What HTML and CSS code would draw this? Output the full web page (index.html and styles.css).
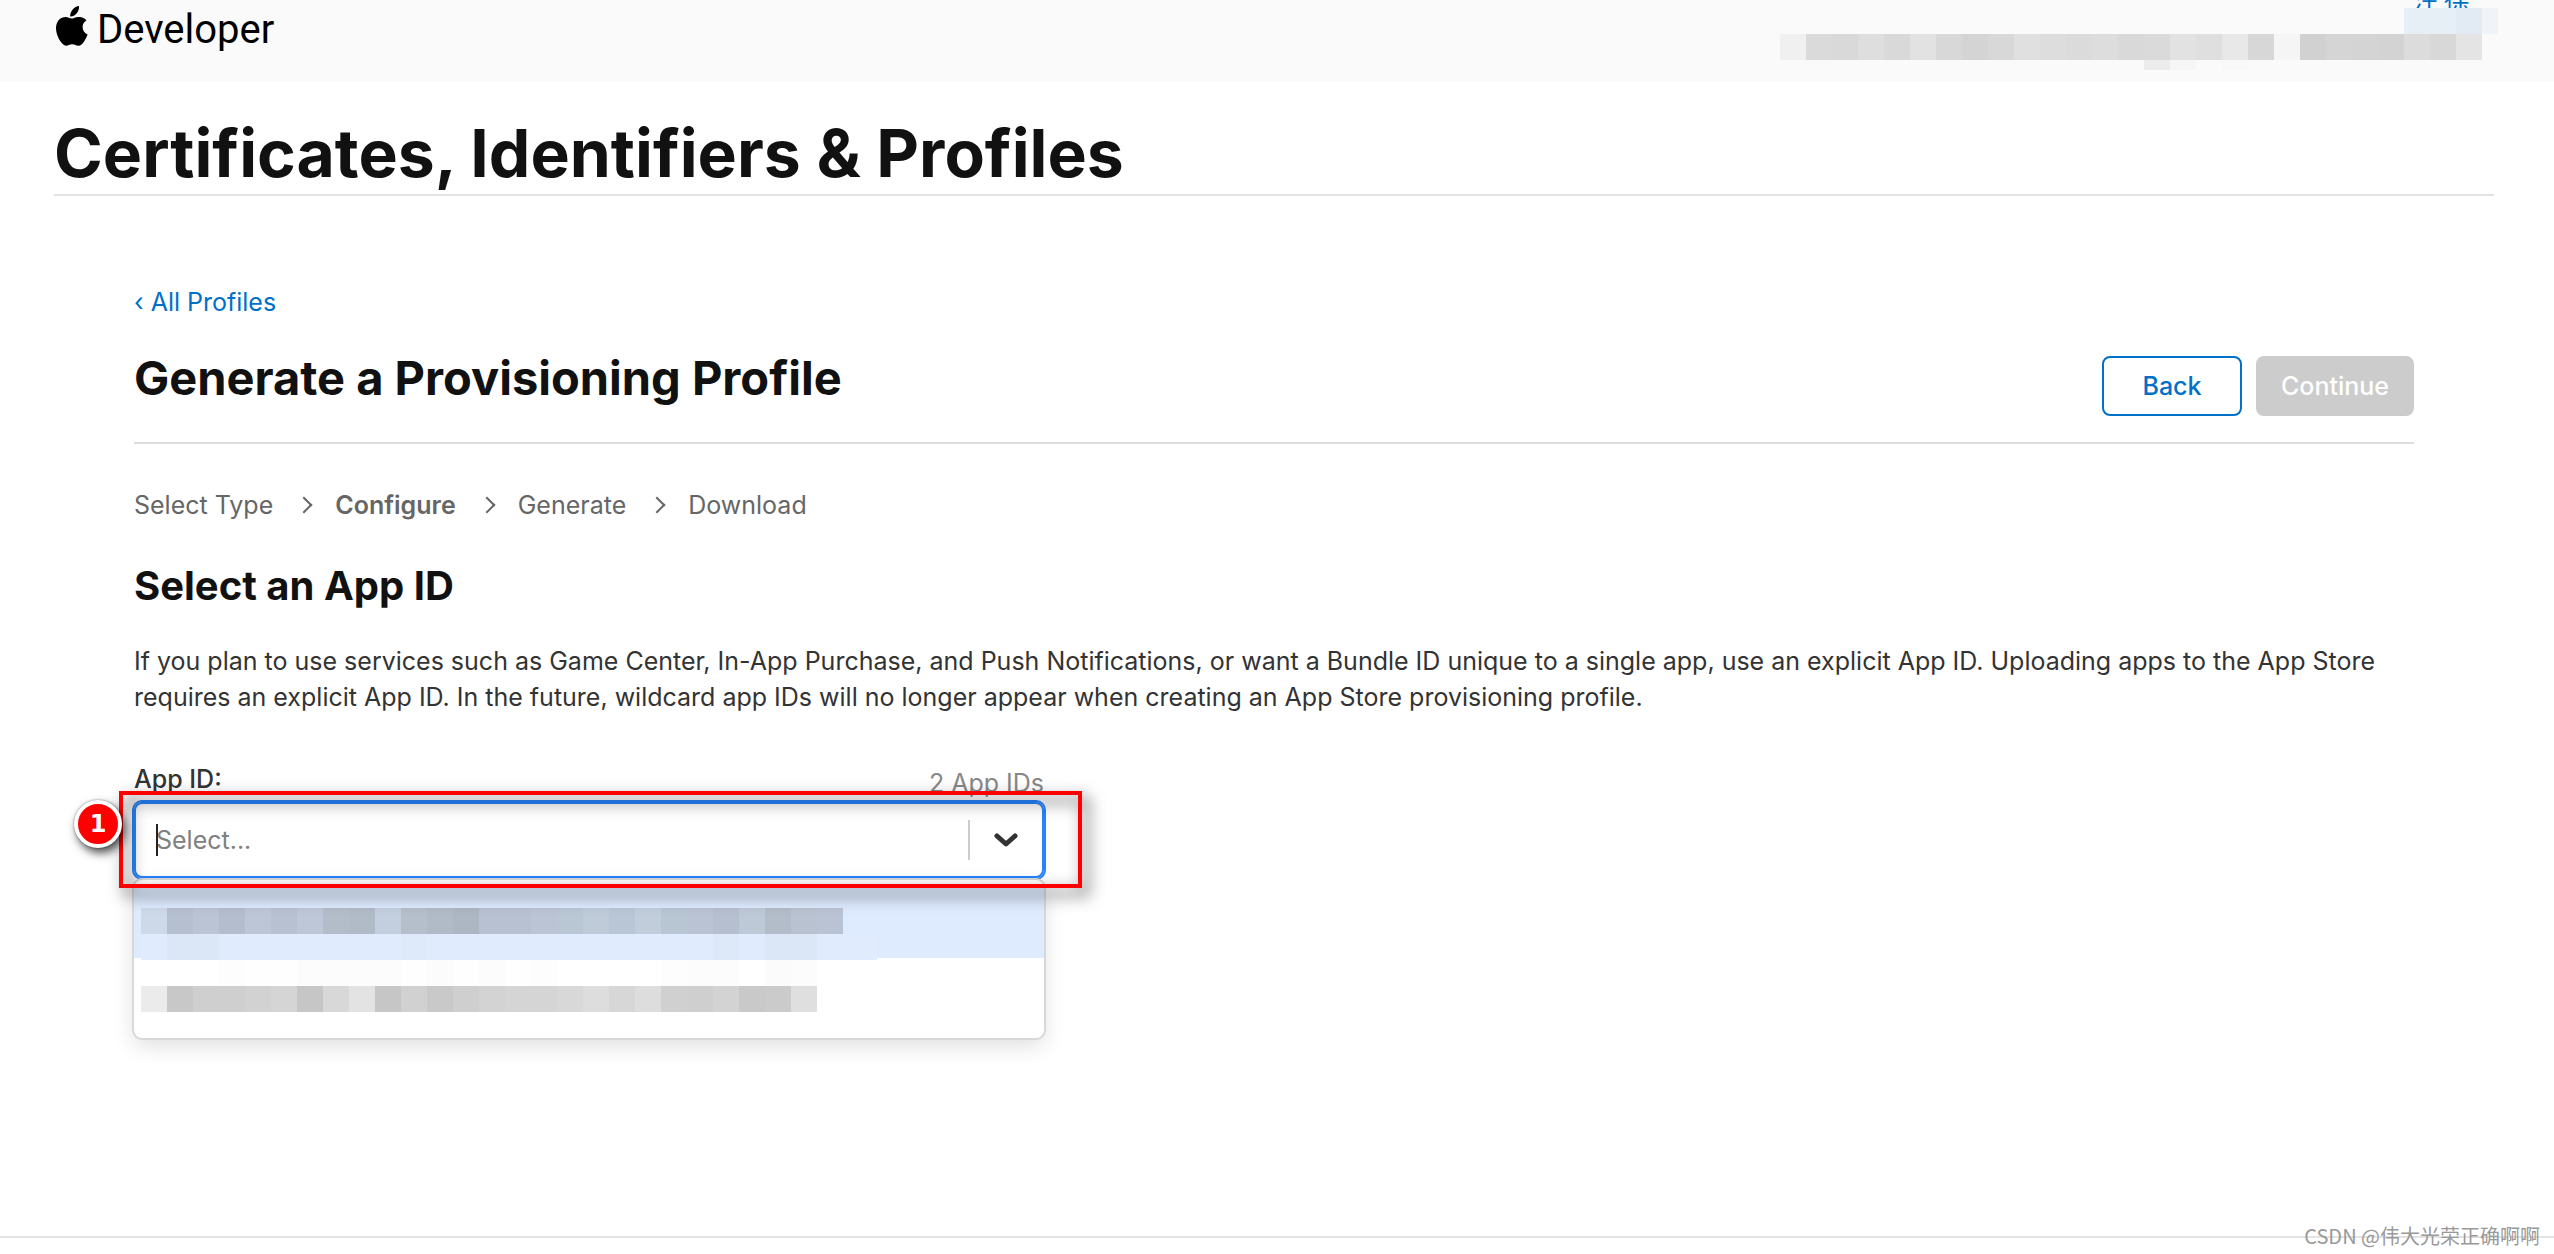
FILE: index.html
```html
<!DOCTYPE html>
<html lang="en">
<head>
    <meta charset="UTF-8">
    <meta name="viewport" content="width=device-width, initial-scale=1.0">
    <title>Certificates, Identifiers &amp; Profiles</title>
    <link rel="stylesheet" href="styles.css">
</head>
<body>
    <header class="topbar">
        <a class="brand" href="#">
            <svg class="brand-logo" viewBox="0 0 32 40" width="32" height="40" aria-hidden="true">
                <path d="M23 0c.3 3-.8 5.700-2.500 7.600-1.600 2-4 3.200-6.300 3-.3-2.800 1-5.500 2.500-7.200C18.300 1.500 21 .1 23 0zM30.500 14.200c-2.600 1.700-3.900 4-3.900 6.800 0 3.300 1.900 6.200 5 7.500-.8 2.400-2 4.700-3.500 6.900-1.700 2.400-3.300 4.300-5.700 4.300-2.500 0-3.300-1.400-6.200-1.400-2.800 0-3.800 1.500-6.100 1.500-2.400 0-4.100-2.100-5.900-4.700C1.900 31.700 0 26.900 0 22.300c0-7.400 4.800-11.300 9.500-11.300 2.500 0 4.600 1.600 6.200 1.600 1.500 0 3.900-1.700 6.800-1.700 1.700 0 5.500.4 8 3.300z"/>
            </svg>
            <span>Developer</span>
        </a>
        <div class="account">
            <a class="account-name" href="#">汪 徐</a>
            <svg class="mosaic" id="accountMosaic" width="718" height="62" aria-hidden="true"></svg>
        </div>
    </header>

    <div class="page-title">
        <h1>Certificates, Identifiers &amp; Profiles</h1>
    </div>

    <main class="container">
        <a class="back-link" href="#">‹ All Profiles</a>

        <div class="toolbar">
            <h2>Generate a Provisioning Profile</h2>
            <div class="actions">
                <button type="button" class="btn btn-outline">Back</button>
                <button type="button" class="btn btn-disabled" disabled>Continue</button>
            </div>
        </div>

        <ol class="steps">
            <li>Select Type</li>
            <li class="current">Configure</li>
            <li>Generate</li>
            <li>Download</li>
        </ol>

        <h3>Select an App ID</h3>
        <p class="intro">If you plan to use services such as Game Center, In-App Purchase, and Push Notifications, or want a Bundle ID unique to a single app, use an explicit App ID. Uploading apps to the App Store requires an explicit App ID. In the future, wildcard app IDs will no longer appear when creating an App Store provisioning profile.</p>

        <div class="field">
            <div class="field-head">
                <label for="appId">App ID:</label>
                <span class="count">2 App IDs</span>
            </div>
            <div class="select">
                <div class="select-control">
                    <span class="caret"></span>
                    <input id="appId" type="text" placeholder="Select..." autocomplete="off">
                    <span class="separator"></span>
                    <svg class="arrow" viewBox="0 0 24 16" width="24" height="16" aria-hidden="true">
                        <path d="M3 4l9 8 9-8"/>
                    </svg>
                </div>
                <ul class="menu">
                    <li class="option focused">
                        <svg class="mosaic" id="optionOne" width="736" height="52" aria-hidden="true"></svg>
                    </li>
                    <li class="option">
                        <svg class="mosaic" id="optionTwo" width="736" height="52" aria-hidden="true"></svg>
                    </li>
                </ul>
                <div class="highlight"></div>
                <div class="badge">1</div>
            </div>
        </div>
    </main>

    <footer class="footer">
        <span class="watermark">CSDN @伟大光荣正确啊啊</span>
    </footer>

    <script src="mosaic.js"></script>
</body>
</html>
```
FILE: mosaic.js
```js
const CELL = 26;

// rows: [x, y, height, 'colors separated by spaces']
function drawMosaic(id, rows) {
    const svg = document.getElementById(id);
    rows.forEach(([x, y, height, colors]) => {
        colors.split(' ').forEach((color, i) => {
            const rect = document.createElementNS('http://www.w3.org/2000/svg', 'rect');
            rect.setAttribute('x', x + i * CELL);
            rect.setAttribute('y', y);
            rect.setAttribute('width', CELL);
            rect.setAttribute('height', height);
            rect.setAttribute('fill', '#' + color);
            svg.appendChild(rect);
        });
    });
}

drawMosaic('accountMosaic', [
    [624, 0, 26, 'e7eff6 e7eff6 e2eaf4 f0f4f8'],
    [0, 26, 26, 'f0f0f0 dadada d9d9d9 dedede d9d9d9 e2e2e2 d8d8d8 d4d4d4 d8d8d8 e0e0e0 dddddd dbdbdb dddddd d9d9d9 dadada e2e2e2 dfdfdf e8e8e8 d7d7d7 f5f5f5 d1d1d1 d5d5d5 d4d4d4 d3d3d3 dcdcdc d8d8d8 e4e4e4'],
    [364, 52, 10, 'ececec f6f6f6 fafafa f8f8f8']
]);

drawMosaic('optionOne', [
    [0, 0, 26, 'cdd9e9 b5bfcf bac4d4 b3bdcd bcc6d6 b7c1d1 bdc7d7 b3bdc9 b1bbc7 c3cfdf b4bfcb b1bbc7 adb7c3 b7c1d1 b7c1d1 bac4d4 b9c6d4 bfcbd9 b9c6d6 c1cddb b8c5d3 b9c3d3 b5bfcf bdc9d7 b3bdc9 b8c2d0 b9c3d3'],
    [0, 26, 26, 'e0ebfd dbe7f7 dbe7f7 e0ebfd e0ebfd e0ebfd e0ebfd e0ebfd e0ebfd e0ebfd deeafa e0ebfd e0ebfd e0ebfd e0ebfd e0ebfd e0ebfd e0ebfd e0ebfd e0ebfd e0ebfd e0ebfd dde9f9 e0ebfd dbe7f6 dbe7f6 e0ebfd e0ebfd e0ebfd']
]);

drawMosaic('optionTwo', [
    [78, 0, 26, 'fdfdfd fefefe fefefe fcfcfc fcfcfc fcfcfc fcfcfc fefefe fcfcfc fefefe fcfcfc fefefe fdfdfd'],
    [520, 0, 26, 'fdfdfd fcfcfc fcfcfc ffffff fbfbfb fcfcfc'],
    [0, 26, 26, 'ebebeb c8c8c8 cfcfcf cfcfcf d2d2d2 d5d5d5 c6c6c6 d8d8d8 e3e3e3 c6c6c6 d1d1d1 c9c9c9 cfcfcf d3d3d3 d5d5d5 d5d5d5 d8d8d8 dddddd d7d7d7 dddddd d0d0d0 cfcfcf d3d3d3 c9c9c9 cbcbcb dfdfdf']
]);
```
FILE: styles.css
```css
* {
    box-sizing: border-box;
}
body {
    display: flex;
    flex-direction: column;
    min-height: 100vh;
    margin: 0;
    font-family: Inter, "Noto Sans CJK SC", sans-serif;
    font-size: 25px;
    line-height: 36px;
    color: #333;
    background-color: #fff;
}
h1, h2, h3 {
    margin: 0;
    color: #111;
    font-weight: 700;
}

/* header */
.topbar {
    display: flex;
    justify-content: space-between;
    height: 82px;
    padding: 0 56px;
    background-color: #fafafa;
}
.brand {
    display: flex;
    align-items: flex-start;
    gap: 9px;
    font-family: Roboto, sans-serif;
    font-size: 40px;
    font-weight: 400;
    line-height: 60px;
    color: #000;
    text-decoration: none;
}
.brand-logo {
    margin-top: 6px;
}
.account {
    display: flex;
    flex-direction: column;
    align-items: flex-end;
}
.account-name {
    height: 22px;
    margin-top: -14px;
    padding-right: 28px;
    overflow: hidden;
    font-family: "Noto Sans CJK SC", sans-serif;
    font-size: 26px;
    line-height: 28px;
    color: #0070c9;
    text-decoration: none;
}
.mosaic {
    display: block;
    shape-rendering: crispEdges;
}

.page-title {
    margin: 0 60px 0 54px;
    padding: 32px 0 2px;
    border-bottom: 2px solid #e3e3e3;
}
h1 {
    font-size: 66px;
    line-height: 78px;
}

/* content */
.container {
    flex: 1;
    padding: 88px 140px 0 134px;
}
.back-link {
    display: inline-block;
    color: #0070c9;
    text-decoration: none;
}
.toolbar {
    display: flex;
    justify-content: space-between;
    align-items: flex-start;
    padding: 36px 0 26px;
    border-bottom: 2px solid #ddd;
}
h2 {
    font-size: 47px;
    line-height: 44px;
}
.actions {
    display: flex;
    gap: 14px;
}
.btn {
    height: 60px;
    padding: 0 22px;
    font-family: inherit;
    font-size: 25px;
    font-weight: 500;
    border: 2px solid #0070c9;
    border-radius: 8px;
}
.btn-outline {
    min-width: 140px;
    color: #0070c9;
    background-color: #fff;
}
.btn-disabled {
    min-width: 158px;
    color: #fff;
    background-color: #ccc;
    border-color: #ccc;
}

.steps {
    display: flex;
    margin: 43px 0 0;
    padding: 0;
    list-style: none;
    color: #666;
}
.steps li {
    display: flex;
    align-items: center;
}
.steps li + li::before {
    content: "";
    width: 10px;
    height: 10px;
    margin: 0 25px;
    border-top: 2px solid #666;
    border-right: 2px solid #666;
    transform: rotate(45deg);
}
.steps .current {
    font-weight: 600;
}
h3 {
    margin-top: 39px;
    font-size: 40px;
    line-height: 48px;
}
.intro {
    margin: 33px 0 0;
}

/* app id picker */
.field {
    width: calc(40% - 2px);
    margin-top: 46px;
}
.field-head {
    display: flex;
    justify-content: space-between;
    align-items: flex-end;
}
.field-head label {
    padding-bottom: 4px;
    font-weight: 500;
}
.count {
    color: #888;
}
.select {
    position: relative;
    padding-top: 1px;
}
.select-control {
    position: relative;
    display: flex;
    align-items: center;
    height: 76px;
    border: 2px solid #2684ff;
    border-radius: 8px;
    box-shadow: 0 0 0 2px #2684ff;
}
.select-control input {
    flex: 1;
    min-width: 0;
    height: 40px;
    padding: 0 20px;
    font-family: inherit;
    font-size: 25px;
    color: #333;
    background: none;
    border: 0;
    outline: 0;
}
.select-control input::placeholder {
    color: #808080;
    opacity: 1;
}
.caret {
    position: absolute;
    left: 20px;
    width: 2px;
    height: 32px;
    background-color: #222;
}
.separator {
    width: 2px;
    height: 40px;
    background-color: #ccc;
}
.arrow {
    margin: 0 24px;
    fill: none;
    stroke: #333;
    stroke-width: 5;
    stroke-linecap: round;
    stroke-linejoin: round;
}
.menu {
    position: absolute;
    top: 79px;
    left: 0;
    right: 0;
    margin: 0;
    padding: 4px 0 2px;
    list-style: none;
    background-color: #fff;
    border-radius: 8px;
    box-shadow: 0 0 0 2px #d8d8d8, 0 8px 22px rgba(0, 0, 0, 0.13);
}
.option {
    height: 78px;
    padding-top: 2px;
}
.option.focused {
    height: 74px;
    padding-top: 24px;
    background-color: #deebff;
}
.option .mosaic {
    margin-left: 7px;
}
.highlight {
    position: absolute;
    top: -10px;
    left: -15px;
    right: -38px;
    height: 97px;
    border: 4px solid #f00;
    filter: drop-shadow(6px 7px 8px rgba(0, 0, 0, 0.8));
    pointer-events: none;
}
.badge {
    position: absolute;
    top: -1px;
    left: -60px;
    width: 48px;
    height: 48px;
    font-family: "DejaVu Sans", sans-serif;
    font-size: 24px;
    font-weight: 700;
    line-height: 40px;
    text-align: center;
    color: #fff;
    background-color: #f00;
    border: 4px solid #fff;
    border-radius: 50%;
    box-shadow: 3px 5px 10px rgba(0, 0, 0, 0.7), 0 0 2px rgba(0, 0, 0, 0.5);
}

/* footer */
.footer {
    position: relative;
    height: 18px;
    border-top: 2px solid #e3e3e3;
}
.watermark {
    position: absolute;
    right: 14px;
    bottom: 6px;
    font-family: "Noto Sans CJK SC", sans-serif;
    font-size: 20px;
    line-height: 24px;
    color: #999;
}
```
